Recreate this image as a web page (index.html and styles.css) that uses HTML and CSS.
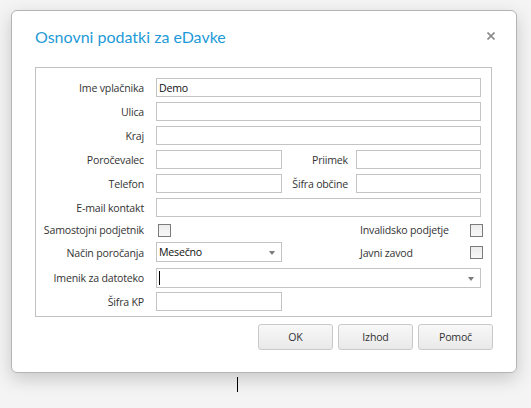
FILE: index.html
```html
<!DOCTYPE html>
<html lang="sl">
<head>
    <meta charset="UTF-8">
    <meta name="viewport" content="width=device-width, initial-scale=1.0">
    <title>Osnovni podatki za eDavke</title>
    <link rel="stylesheet" href="styles.css">
</head>
<body>
    <div class="dialog">
        <div class="dialog-header">
            <h1 class="dialog-title">Osnovni podatki za eDavke</h1>
            <span class="close">
                <svg width="8" height="8" viewBox="0 0 8 8"><path d="M0.5 0.5 L7.5 7.5 M7.5 0.5 L0.5 7.5" stroke="#8a8a8a" stroke-width="1.6"/></svg>
            </span>
        </div>

        <div class="panel">
            <label class="lbl">Ime vplačnika</label>
            <div class="field wide">Demo</div>

            <label class="lbl">Ulica</label>
            <div class="field wide"></div>

            <label class="lbl">Kraj</label>
            <div class="field wide"></div>

            <label class="lbl">Poročevalec</label>
            <div class="field"></div>
            <label class="lbl lbl-mid">Priimek</label>
            <div class="field field-right"></div>

            <label class="lbl">Telefon</label>
            <div class="field"></div>
            <label class="lbl lbl-mid">Šifra občine</label>
            <div class="field field-right"></div>

            <label class="lbl">E-mail kontakt</label>
            <div class="field wide"></div>

            <label class="lbl row-check">Samostojni podjetnik</label>
            <div class="check-cell row-check"><span class="check"></span></div>
            <div class="side row-check">
                <span>Invalidsko podjetje</span>
                <span class="check"></span>
            </div>

            <label class="lbl">Način poročanja</label>
            <div class="field combo">Mesečno<span class="arrow"></span></div>
            <div class="side">
                <span>Javni zavod</span>
                <span class="check"></span>
            </div>

            <label class="lbl">Imenik za datoteko</label>
            <div class="field wide combo"><span class="caret"></span><span class="arrow"></span></div>

            <label class="lbl">Šifra KP</label>
            <div class="field"></div>
        </div>

        <div class="buttons">
            <button class="btn">OK</button>
            <button class="btn">Izhod</button>
            <button class="btn">Pomoč</button>
        </div>
    </div>
    <span class="pointer"></span>
</body>
</html>
```

FILE: styles.css
```css
body {
    margin: 0;
    padding: 10px 15px 0 11px;
    background-color: #f4f4f4;
    font-family: 'Open Sans', sans-serif;
    font-size: 10.6px;
    letter-spacing: -0.2px;
    color: #333;
    position: relative;
    height: 398px;
}

.dialog {
    width: 506px;
    height: 363px;
    background-color: #fff;
    border: 1px solid #b4b4b4;
    border-radius: 6px;
    box-shadow: 0 6px 18px rgba(0, 0, 0, 0.18);
    padding: 0 24px 0 23px;
    box-sizing: border-box;
}

.dialog-header {
    display: flex;
    justify-content: space-between;
    align-items: center;
    height: 56px;
}

.dialog-title {
    margin: -6px 0 0;
    font-family: 'Lato', sans-serif;
    font-weight: normal;
    font-size: 16px;
    letter-spacing: 0;
    color: #1e9ad8;
}

.close {
    display: flex;
    margin-right: -3px;
    margin-top: -6px;
}

.panel {
    border: 1px solid #c2c2c2;
    padding: 10px 9px 5px 0;
    display: grid;
    grid-template-columns: 108px 138px 74px 125px;
    grid-template-rows: repeat(6, 19px) 15px 21px 19px 19px;
    row-gap: 5px;
}

.lbl {
    grid-column: 1;
    display: flex;
    align-items: center;
    justify-content: flex-end;
    white-space: nowrap;
}

.lbl-mid {
    grid-column: 3;
    padding-right: 8px;
}

.field {
    grid-column: 2;
    margin-left: 12px;
    width: 126px;
    height: 19px;
    border: 1px solid #c4c4c4;
    box-sizing: border-box;
    padding-left: 2px;
    display: flex;
    align-items: center;
    color: #111;
    position: relative;
}

.field-right {
    grid-column: 4;
    margin-left: 0;
    width: 125px;
}

.field.wide {
    grid-column: 2 / span 3;
    width: 325px;
}

.field.combo {
    height: 20px;
}

.arrow {
    position: absolute;
    right: 6px;
    top: 8px;
    border-left: 3.5px solid transparent;
    border-right: 3.5px solid transparent;
    border-top: 4px solid #7a7a7a;
}

.caret {
    width: 1px;
    height: 14px;
    background-color: #000;
}

.row-check {
    align-self: end;
}

.check-cell {
    grid-column: 2;
    margin-left: 14px;
}

.check {
    display: block;
    width: 13px;
    height: 13px;
    box-sizing: border-box;
    border: 1px solid #7b7b7b;
    background: linear-gradient(#ececec, #f8f8f8);
}

.side {
    grid-column: 4;
    display: flex;
    align-items: center;
    justify-content: space-between;
    padding-left: 4px;
    margin-right: -2px;
    white-space: nowrap;
}

.buttons {
    display: flex;
    justify-content: flex-end;
    gap: 5px;
    margin-top: 7px;
    margin-right: -1px;
}

.btn {
    width: 75px;
    height: 26px;
    font-family: inherit;
    font-size: 10.6px;
    letter-spacing: -0.2px;
    color: #333;
    border: 1px solid #c9c9c9;
    border-radius: 3px;
    background: linear-gradient(#f8f8f8, #e9e9e9);
}

.pointer {
    position: absolute;
    left: 237px;
    top: 377px;
    width: 1px;
    height: 15px;
    background-color: #000;
}
```
